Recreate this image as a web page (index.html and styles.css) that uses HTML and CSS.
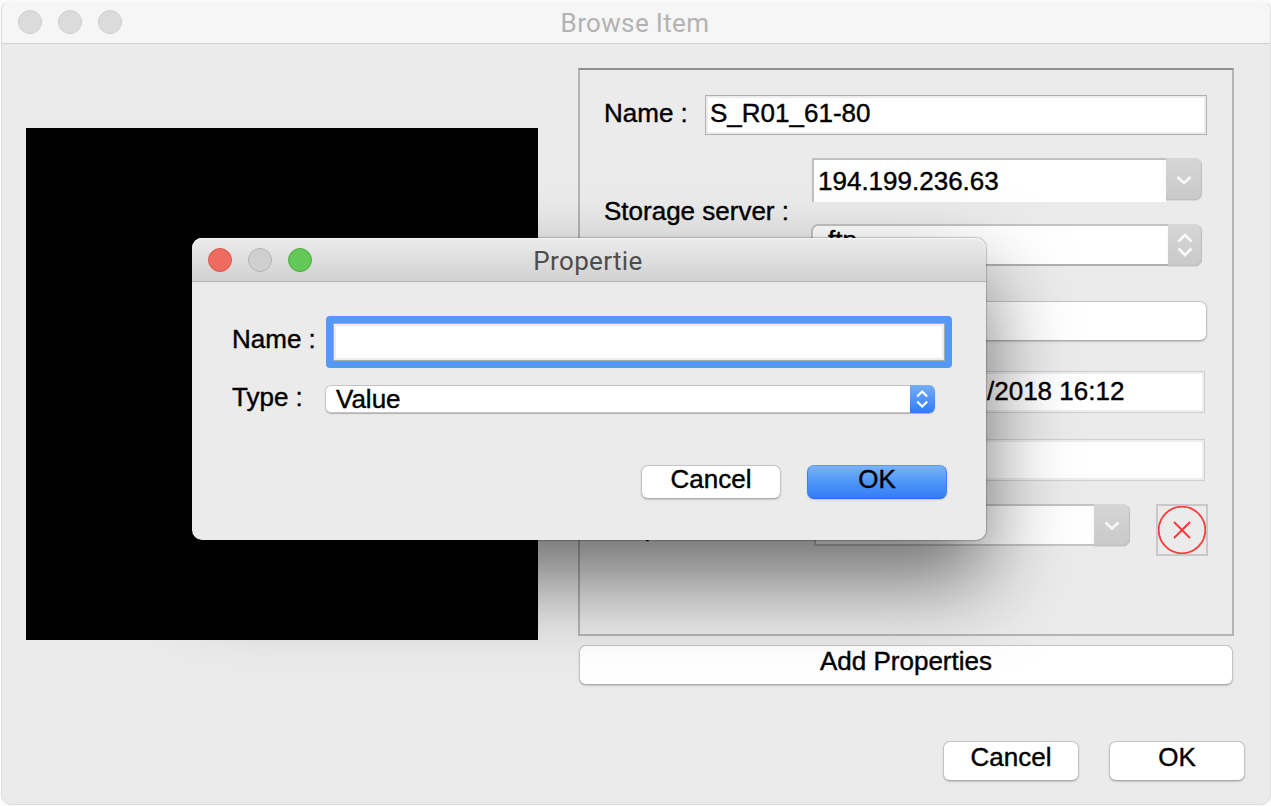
FILE: index.html
```html
<!DOCTYPE html>
<html lang="en">
<head>
<meta charset="utf-8">
<title>Browse Item</title>
<link rel="stylesheet" href="styles.css">
</head>
<body>
<main class="window">
  <header class="titlebar">
    <div class="lights"><i class="light"></i><i class="light"></i><i class="light"></i></div>
    <h1 class="title">Browse Item</h1>
  </header>
  <div class="content">
    <div class="preview"></div>
    <div class="details">
      <section class="panel">
        <div class="row row-name">
          <label class="label">Name :</label>
          <div class="field"><span>S_R01_61-80</span></div>
        </div>
        <div class="row row-server">
          <label class="label">Storage server :</label>
          <div class="stack">
            <div class="combo combo-edit">
              <div class="combo-text">194.199.236.63</div>
              <div class="combo-arrow"><svg width="36" height="42" viewBox="0 0 36 42"><path d="M11.5 19l6.5 6 6.5-6"/></svg></div>
            </div>
            <div class="combo combo-pop">
              <div class="combo-text">ftp</div>
              <div class="combo-arrow"><svg width="34" height="42" viewBox="0 0 34 42"><path d="M10.5 17.5l6.5-6.5 6.5 6.5M10.5 24.5l6.5 6.5 6.5-6.5"/></svg></div>
            </div>
          </div>
        </div>
        <div class="row row-button"><div class="button"></div></div>
        <div class="row row-date"><div class="field soft"><span>/2018 16:12</span></div></div>
        <div class="row row-blank"><div class="field soft"></div></div>
        <div class="row row-props">
          <label class="label">Properties :</label>
          <div class="combo combo-list">
            <div class="combo-text"></div>
            <div class="combo-arrow"><svg width="36" height="42" viewBox="0 0 36 42"><path d="M11.5 18.5l6.5 6 6.5-6"/></svg></div>
          </div>
          <div class="remove"><svg width="48" height="48" viewBox="0 0 48 48"><circle cx="24" cy="24" r="23.3"/><path d="M16 16l16 16M32 16l-16 16"/></svg></div>
        </div>
      </section>
      <div class="button add">Add Properties</div>
    </div>
  </div>
  <footer class="actions">
    <div class="button">Cancel</div>
    <div class="button">OK</div>
  </footer>
</main>

<div class="dialog">
  <header class="dialog-bar">
    <div class="lights"><i class="light red"></i><i class="light gray"></i><i class="light green"></i></div>
    <h2 class="title">Propertie</h2>
  </header>
  <div class="dialog-row first">
    <label class="label">Name :</label>
    <div class="focus"><div class="focus-field"></div></div>
  </div>
  <div class="dialog-row second">
    <label class="label">Type :</label>
    <div class="select">
      <span class="select-text">Value</span>
      <div class="select-arrow"><svg width="25" height="28" viewBox="0 0 25 28"><path d="M7.2 11.5l5-5 5 5M7.2 16.5l5 5 5-5"/></svg></div>
    </div>
  </div>
  <div class="dialog-actions">
    <div class="button">Cancel</div>
    <div class="button primary">OK</div>
  </div>
</div>
</body>
</html>
```
FILE: styles.css
```css
* { box-sizing: border-box; }
body {
  margin: 0;
  width: 1271px;
  height: 806px;
  overflow: hidden;
  background: #fbfbfb;
  color: #000;
  font: 26px/30px "Liberation Sans", Arial, sans-serif;
  -webkit-text-stroke: .4px;
}
.window {
  width: 1270px;
  height: 805px;
  margin-left: 1px;
  background: #ebebeb;
  border: 1px solid #dedede;
  border-top-color: #fafafa;
  border-radius: 10px;
  overflow: hidden;
}
.titlebar {
  display: grid;
  height: 43px;
  background: #f6f6f6;
  border-bottom: 1px solid #d0d0d0;
}
.titlebar > *, .dialog-bar > * { grid-area: 1 / 1; }
.title {
  margin: 0;
  text-align: center;
  font: 400 26px/30px Roboto, Inter, sans-serif;
  letter-spacing: .35px;
  -webkit-text-stroke: 0;
}
.titlebar .title { color: #b3b3b3; padding: 7px 2px 0 0; }
.lights { display: flex; gap: 16px; }
.titlebar .lights { padding: 9px 0 0 16px; }
.light {
  width: 24px;
  height: 24px;
  border-radius: 50%;
  background: #dcdcdc;
  border: 1px solid #cdcdcd;
}
.content { display: flex; padding: 24px 0 0 24px; gap: 40px; }
.preview { width: 512px; height: 512px; margin-top: 60px; background: #000; }
.panel {
  width: 656px;
  height: 568px;
  border: 2px solid #b4b4b4;
  border-top-color: #8f8f8f;
  padding: 25px 0 0 24px;
}
.row { display: flex; }
.label { white-space: nowrap; }
.field {
  border: 1px solid #b0b0b0;
  background: #fff;
  box-shadow: inset 0 0 0 2px #ededed;
}
.field.soft { border-color: #cecece; }
.row-name { height: 40px; }
.row-name .label { width: 101px; padding-top: 3px; }
.row-name .field { width: 502px; padding: 2px 0 0 4px; }
.row-server { height: 108px; margin-top: 23px; }
.row-server .label { width: 207px; padding-top: 38px; }
.stack { display: flex; flex-direction: column; gap: 24px; }
.combo { display: flex; height: 42px; }
.combo-text { flex: 1; background: #fff; }
.combo-arrow {
  background: linear-gradient(#d6d6d6, #c9c9c9);
  border-radius: 0 7px 7px 0;
  box-shadow: inset -1px -1px 1px #c0c0c0, 0 1px 1px #d8d8d8;
}
svg { display: block; }
svg path { fill: none; stroke: #f8f8f8; stroke-width: 2.7; }
.combo-edit { width: 390px; margin-left: 1px; }
.combo-edit .combo-text {
  height: 44px;
  border: solid #c0c0c0;
  border-width: 2px 0 0 2px;
  padding: 6px 0 0 4px;
}
.combo-pop { width: 391px; }
.combo-pop .combo-text {
  border: 2px solid #c3c3c3;
  border-right: 0;
  border-bottom-color: #b0b0b0;
  border-radius: 7px 0 0 7px;
  padding-left: 15px;
  line-height: 28px;
}
.row-button { height: 40px; margin: 35px 0 0 101px; }
.button {
  height: 40px;
  text-align: center;
  background: #fff;
  border: 1px solid #c4c4c4;
  border-bottom-color: #aaa;
  border-radius: 7px;
  box-shadow: 0 1px 2px rgba(0, 0, 0, .16);
}
.row-button .button { width: 502px; }
.row-date { height: 42px; margin: 30px 0 0 210px; }
.row-blank { height: 42px; margin: 26px 0 0 210px; }
.row-date .field, .row-blank .field { width: 391px; }
.row-date .field { padding: 4px 0 0 172px; }
.row-props { height: 52px; margin-top: 23px; }
.row-props .label { width: 210px; padding-top: 8px; }
.combo-list { width: 316px; }
.combo-list .combo-text { border: 2px solid #c4c4c4; border-right: 0; }
.remove { width: 52px; height: 52px; margin-left: 26px; border: 2px solid #c8c8c8; }
.remove circle { fill: none; stroke: #ff3a3a; stroke-width: 1.8; }
.remove path { stroke: #ff3232; stroke-width: 1.8; }
.button.add { width: 654px; margin: 9px 0 0 1px; }
.actions {
  display: flex;
  justify-content: flex-end;
  gap: 30px;
  padding: 56px 25px 0 0;
}
.actions .button { width: 136px; }

/* Modal dialog over the main window */
.dialog {
  position: absolute;
  left: 192px;
  top: 238px;
  width: 794px;
  height: 302px;
  border-radius: 10px;
  background: #ebebeb;
  box-shadow: 0 0 1px 1px rgba(0, 0, 0, .2), 0 40px 84px rgba(0, 0, 0, .54);
}
.dialog-bar {
  display: grid;
  height: 44px;
  border-radius: 10px 10px 0 0;
  background: linear-gradient(#ececec, #d1d1d1);
  border-bottom: 1px solid #b2b2b2;
  box-shadow: inset 0 1px #f6f6f6;
}
.dialog-bar .lights { padding: 10px 0 0 16px; }
.dialog-bar .title { color: #4d4d4d; padding: 8px 2px 0 0; }
.light.red { background: #ed6b60; border-color: #d8564c; }
.light.gray { background: #d0d0d0; border-color: #b3b3b3; }
.light.green { background: #62c857; border-color: #4fac44; }
.dialog-row { display: flex; padding-left: 40px; }
.first { padding-top: 34px; }
.first .label { width: 94px; padding-top: 8px; }
.focus { width: 626px; height: 52px; padding: 7px; border-radius: 4px; background: #5499f5; }
.focus-field { height: 38px; background: #fff; border: 1px solid #aaa; box-shadow: inset 0 0 0 2px #ededed; }
.second { padding-top: 14px; height: 60px; }
.second .label { width: 93px; }
.select {
  display: flex;
  justify-content: space-between;
  width: 610px;
  height: 28px;
  margin-top: 3px;
  background: #fff;
  border-radius: 6px;
  box-shadow: inset 0 0 0 1px #c4c4c4, 0 1px 1px rgba(0, 0, 0, .25);
}
.select-text { padding-left: 11px; line-height: 28px; }
.select-arrow {
  width: 25px;
  border-radius: 0 6px 6px 0;
  background: linear-gradient(#73aef5, #2f7bf6);
}
.select-arrow path { stroke: #fff; stroke-width: 2.2; }
.dialog-actions {
  display: flex;
  justify-content: flex-end;
  gap: 26px;
  padding: 37px 39px 0 0;
}
.dialog-actions .button { width: 140px; height: 34px; line-height: 27px; }
.button.primary {
  background: linear-gradient(#7ab3f5, #4a93f7 55%, #337df6);
  border-color: #5d9df0 #3d82ef #2668f0;
}
```
